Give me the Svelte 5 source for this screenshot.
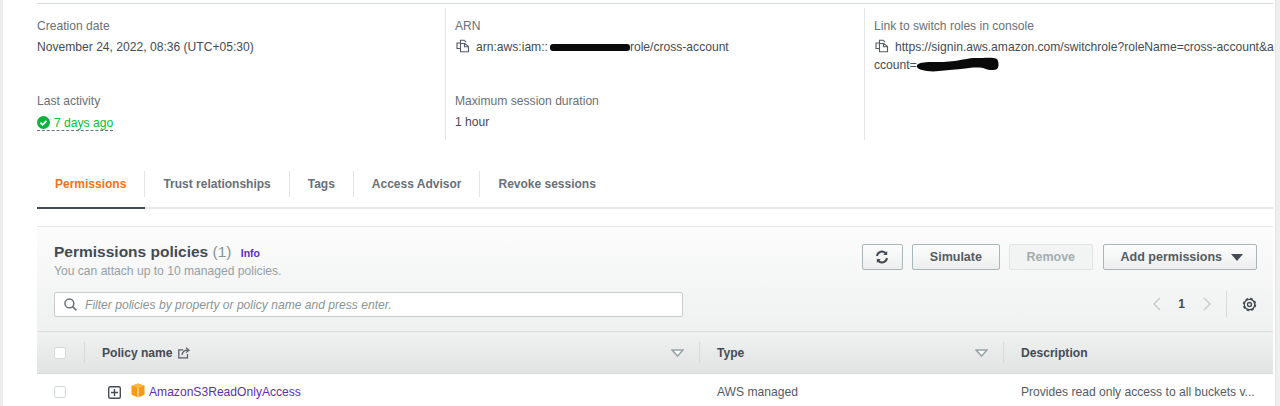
<script lang="ts">
  const tabs = ['Permissions', 'Trust relationships', 'Tags', 'Access Advisor', 'Revoke sessions'];
</script>

{#snippet copyIcon()}
  <svg class="copy" width="14" height="14" viewBox="0 0 14 14" fill="none" stroke="#545b64" stroke-width="1.1">
    <path d="M4.500 4V1.200h3.600l2 2" />
    <path d="M4.500 9.500H1V4h3.500" />
    <path d="M4.500 4.500h4.300l3.700 3v5.300H4.500z" fill="#fff" />
    <path d="M8.500 4.500v3.300h4" />
  </svg>
{/snippet}

{#snippet sortIcon()}
  <svg class="sort" width="13" height="8" viewBox="0 0 13 8"><path d="M1 1h11L6.500 7z" fill="#fff" stroke="#95a5a6" stroke-width="1.600" /></svg>
{/snippet}

<div class="page">
  <main class="content">
    <section class="details">
      <div class="col first">
        <div class="field">
          <div class="label">Creation date</div>
          <div class="value">November 24, 2022, 08:36 (UTC+05:30)</div>
        </div>
        <div class="field">
          <div class="label">Last activity</div>
          <div class="value activity">
            <svg width="13" height="13" viewBox="0 0 13 13"><circle cx="6.500" cy="6.500" r="6.500" fill="#0ab33b" /><path d="M3.400 6.600l2.200 2.200 4-4" fill="none" stroke="#fff" stroke-width="1.800" /></svg>
            <span>7 days ago</span>
          </div>
        </div>
      </div>
      <div class="col second">
        <div class="field">
          <div class="label">ARN</div>
          <div class="value">{@render copyIcon()}arn:aws:iam::<span class="redact arn"></span>role/cross-account</div>
        </div>
        <div class="field">
          <div class="label">Maximum session duration</div>
          <div class="value">1 hour</div>
        </div>
      </div>
      <div class="col third">
        <div class="field">
          <div class="label">Link to switch roles in console</div>
          <div class="value link">{@render copyIcon()}https://signin.aws.amazon.com/switchrole?roleName=cross-account&amp;account=<svg class="redact-blob" width="82" height="15" viewBox="0 0 82 15"><path d="M0 8c3-3 10-3 16-3s14 0 22-1 12-3 22-3c7 0 17-1 20 1 2 3 2 8 0 10-3 2-10 1-14-1-7-1-14 0-22 1s-15 1-22 2-13 0-17-1-6-3-5-5z" fill="#0a0a0a" /></svg></div>
        </div>
      </div>
    </section>

    <nav class="tabs">
      {#each tabs as tab, i}
        <div class="tab" class:active={i === 0}><span class="tab-text">{tab}</span></div>
      {/each}
    </nav>

    <section class="panel">
      <header class="panel-head">
        <div class="title-row">
          <div class="title-block">
            <h2>Permissions policies <span class="count">(1)</span> <a class="info" href="#info">Info</a></h2>
            <p>You can attach up to 10 managed policies.</p>
          </div>
          <div class="actions">
            <button class="btn icon" aria-label="Refresh">
              <svg width="14" height="14" viewBox="0 0 14 14" fill="none" stroke="#444b55" stroke-width="2">
                <path d="M2 6a5 5 0 0 1 9-2.300" />
                <path d="M12 8a5 5 0 0 1-9 2.300" />
                <path d="M12.200 1v4h-4z" fill="#444b55" stroke="none" />
                <path d="M1.800 13V9h4z" fill="#444b55" stroke="none" />
              </svg>
            </button>
            <button class="btn">Simulate</button>
            <button class="btn disabled">Remove</button>
            <button class="btn add">Add permissions <span class="caret"></span></button>
          </div>
        </div>
        <div class="filter-row">
          <div class="search">
            <svg width="13" height="13" viewBox="0 0 13 13" fill="none" stroke="#687078" stroke-width="1.500"><circle cx="5.400" cy="5.400" r="4.400" /><path d="M8.600 8.600l3.800 3.800" /></svg>
            <span>Filter policies by property or policy name and press enter.</span>
          </div>
          <div class="pager">
            <svg width="9" height="14" viewBox="0 0 9 14" fill="none" stroke="#c4c9cc" stroke-width="1.400"><path d="M8 1L2 7l6 6" /></svg>
            <strong>1</strong>
            <svg width="9" height="14" viewBox="0 0 9 14" fill="none" stroke="#c4c9cc" stroke-width="1.400"><path d="M1 1l6 6-6 6" /></svg>
            <i class="pager-sep"></i>
            <svg class="gear" width="15" height="15" viewBox="0 0 15 15" fill="none" stroke="#444b55">
              <circle cx="7.500" cy="7.500" r="5.800" stroke-width="1.800" stroke-dasharray="2.600 1.950" />
              <circle cx="7.500" cy="7.500" r="5.200" stroke-width="1.300" />
              <circle cx="7.500" cy="7.500" r="2" stroke-width="1.400" />
            </svg>
          </div>
        </div>
      </header>

      <div class="table-head">
        <div class="cell check"><span class="box"></span></div>
        <div class="cell name">
          <b>Policy name</b>
          <svg width="12" height="12" viewBox="0 0 12 12" fill="none" stroke="#545b64" stroke-width="1.200"><path d="M9.500 7v3.800H.8V2.800h4.400" /><path d="M4 8c.4-3 2.400-4.800 6-4.800" /><path d="M8 .8l3 2.400-3 2.400" /></svg>
          {@render sortIcon()}
        </div>
        <div class="cell type"><b>Type</b>{@render sortIcon()}</div>
        <div class="cell desc"><b>Description</b></div>
      </div>

      <div class="table-row">
        <div class="cell check"><span class="box"></span></div>
        <div class="cell name">
          <svg class="expand" width="13" height="13" viewBox="0 0 13 13" fill="none" stroke="#444b55" stroke-width="1.400"><rect x=".7" y=".7" width="11.600" height="11.600" rx="1.500" /><path d="M6.500 3v7M3 6.500h7" /></svg>
          <svg class="cube" width="14" height="15" viewBox="0 0 14 15"><path d="M7 .5l6.500 2.200v9L7 14.500.5 11.700v-9z" fill="#f99a10" /><path d="M7 .5l6.500 2.200L7 5 .5 2.700z" fill="#fcb948" /><path d="M7 5v9.500" stroke="#fff" stroke-width=".9" /></svg>
          <a href="#policy">AmazonS3ReadOnlyAccess</a>
        </div>
        <div class="cell type">AWS managed</div>
        <div class="cell desc">Provides read only access to all buckets v...</div>
      </div>
    </section>
  </main>
  <div class="scrollbar"></div>
</div>

<style>
  :global(body) {
    margin: 0;
    background: #fff;
  }

  .page {
    display: flex;
    height: 406px;
    overflow: hidden;
    border-left: 3px solid #ededed;
    box-sizing: border-box;
    font-family: "Liberation Sans", Arial, sans-serif;
    font-size: 12.1px;
    color: #545b64;
  }

  .content {
    flex: 1;
    min-width: 0;
    padding: 3px 2px 0 34px;
  }

  .scrollbar {
    width: 4px;
    background: #efefef;
    border-left: 1px solid #e4e4e4;
    flex: none;
  }

  .details {
    display: grid;
    grid-template-columns: 408px 419px 1fr;
    border-top: 1px solid #d5dbdb;
    padding-top: 4px;
    height: 132px;
  }

  .col {
    display: flex;
    flex-direction: column;
    gap: 31px;
    padding-top: 10px;
  }

  .second, .third {
    border-left: 1px solid #e2e5e6;
    padding-left: 9px;
  }

  .field {
    height: 44px;
  }

  .label {
    line-height: 17px;
    color: #687078;
    margin-bottom: 3px;
  }

  .value {
    line-height: 18px;
    color: #444b55;
  }

  .value .copy {
    vertical-align: -2px;
    margin: 0 6px 0 1px;
  }

  .link {
    word-break: break-all;
    margin-right: -3px;
  }

  .activity {
    display: flex;
    align-items: center;
    gap: 4px;
    color: #00c23a;
    width: max-content;
    border-bottom: 1px dashed #687078;
    height: 15px;
    margin-top: 5px;
  }

  .activity svg {
    flex: none;
  }

  .redact {
    display: inline-block;
    background: #0a0a0a;
  }

  .redact.arn {
    width: 80px;
    height: 7px;
    border-radius: 3px;
    margin-left: 2px;
    vertical-align: 0;
  }

  .redact-blob {
    vertical-align: -3px;
  }

  .tabs {
    display: flex;
    margin-top: 21px;
    height: 46px;
    border-bottom: 2px solid #e5e8e8;
  }

  .tab {
    display: flex;
    align-items: flex-start;
    margin-bottom: -2px;
    padding-top: 10px;
    font-size: 12px;
    font-weight: 700;
    color: #687078;
  }

  .tab-text {
    padding: 0 18px;
    height: 26px;
    line-height: 26px;
    border-right: 1px solid #e2e5e6;
  }

  .tab:last-child .tab-text {
    border-right: none;
  }

  .tab.active {
    border-bottom: 2px solid #444b55;
    color: #f47216;
  }

  .panel {
    margin-top: 17px;
    border-top: 1px solid #e6e8e8;
  }

  .panel-head {
    background: linear-gradient(#fcfcfc, #eff0f0);
    height: 104px;
    padding: 14px 16px 0 17px;
    box-sizing: border-box;
  }

  .title-row {
    display: flex;
    justify-content: space-between;
  }

  .title-block h2 {
    margin: 0;
    font-size: 15.500px;
    line-height: 22px;
    font-weight: 700;
    color: #444b55;
  }

  .count {
    font-weight: 400;
    color: #879596;
  }

  .info {
    font-size: 10.500px;
    color: #5a30b5;
    text-decoration: none;
    margin-left: 5px;
  }

  .title-block p {
    margin: 0;
    line-height: 14px;
    color: #95a0a6;
  }

  .actions {
    display: flex;
    gap: 9px;
    padding-top: 3px;
  }

  .btn {
    height: 26px;
    padding: 0 17px;
    font: 700 12.500px "Liberation Sans", Arial, sans-serif;
    color: #545b64;
    background: linear-gradient(#fdfdfd, #eceeee);
    border: 1px solid #aab7b8;
    border-radius: 2px;
    display: flex;
    align-items: center;
  }

  .btn.icon {
    width: 41px;
    padding: 0;
    justify-content: center;
  }

  .btn.disabled {
    color: #a4adae;
    background: #f2f3f3;
    border-color: #e1e4e4;
    padding: 0 16.500px;
    margin-right: 1px;
  }

  .caret {
    width: 0;
    height: 0;
    border: solid transparent;
    border-width: 7px 6.500px 0;
    border-top-color: #444b55;
    margin-left: 9px;
  }

  .add {
    padding-right: 13px;
  }

  .filter-row {
    display: flex;
    justify-content: space-between;
    align-items: center;
    margin-top: 13px;
  }

  .search {
    width: 629px;
    height: 25px;
    box-sizing: border-box;
    background: #fff;
    border: 1px solid #c6cccc;
    border-radius: 2px;
    display: flex;
    align-items: center;
    gap: 8px;
    padding: 1px 0 0 9px;
    font-style: italic;
    color: #879596;
  }

  .pager {
    display: flex;
    align-items: center;
    height: 26px;
    color: #444b55;
  }

  .pager strong {
    margin: 0 18px 0 17px;
  }

  .pager-sep {
    width: 1px;
    height: 26px;
    background: #d5dbdb;
    margin: 0 15px 0 14px;
  }

  .table-head, .table-row {
    display: grid;
    grid-template-columns: 47px 615px 304px 1fr;
    align-items: center;
  }

  .table-head {
    height: 43px;
    box-sizing: border-box;
    background: linear-gradient(#f0f1f1, #e2e3e3);
    border-top: 1px solid #dcdfdf;
    border-bottom: 1px solid #d5dbdb;
    color: #444b55;
  }

  .table-row {
    height: 32px;
    padding-top: 2px;
  }

  .cell {
    display: flex;
    align-items: center;
    min-width: 0;
  }

  .check {
    padding-left: 17px;
  }

  .box {
    width: 10px;
    height: 10px;
    background: #fff;
    border: 1px solid #d3d8d8;
    border-radius: 2px;
  }

  .table-head .name, .table-head .type, .table-head .desc {
    height: 21px;
    border-left: 1px solid #d5dbdb;
    padding-left: 17px;
    box-sizing: border-box;
  }

  .table-head .name svg:first-of-type {
    margin-left: 5px;
  }

  .table-head .sort {
    margin-left: auto;
    margin-right: 15px;
  }

  .table-row .name {
    padding-left: 24px;
  }

  .table-row .type, .table-row .desc {
    padding-left: 18px;
  }

  .table-row .name a {
    color: #5a30b5;
    text-decoration: none;
    margin-left: 4px;
  }

  .cube {
    margin-left: 10px;
    margin-bottom: 3px;
  }
</style>
